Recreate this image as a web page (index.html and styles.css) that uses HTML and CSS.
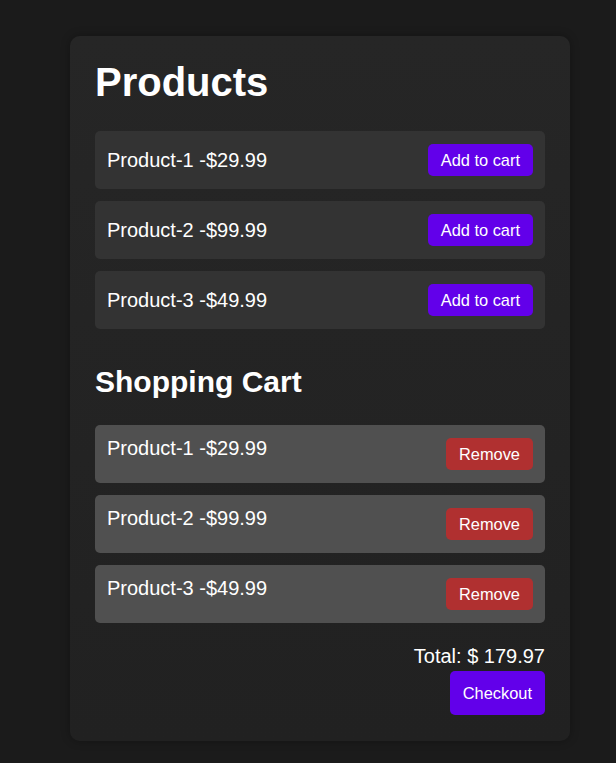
FILE: index.html
```html
<!DOCTYPE html>
<html lang="en">
<head>
	<meta charset="UTF-8">
	<title>Shop</title>
	<link rel="stylesheet" href="styles.css">
</head>
<body>
	<div class="shop">
		<h1>Products</h1>
		<ul class="list products">
			<li><span>Product-1 -$29.99</span><button class="btn add">Add to cart</button></li>
			<li><span>Product-2 -$99.99</span><button class="btn add">Add to cart</button></li>
			<li><span>Product-3 -$49.99</span><button class="btn add">Add to cart</button></li>
		</ul>
		<h2>Shopping Cart</h2>
		<ul class="list cart">
			<li><span>Product-1 -$29.99</span><button class="btn remove">Remove</button></li>
			<li><span>Product-2 -$99.99</span><button class="btn remove">Remove</button></li>
			<li><span>Product-3 -$49.99</span><button class="btn remove">Remove</button></li>
		</ul>
		<div class="total">
			<p>Total: $ 179.97</p>
			<button class="btn checkout">Checkout</button>
		</div>
	</div>
</body>
</html>
```
FILE: styles.css
```css
*{margin: 0;padding: 0;box-sizing: border-box;}
li{list-style: none;}
body { background: #1b1b1b; font-family: "Liberation Sans", Arial, sans-serif; color: #fff; padding: 36px 0 20px; }
.shop { width: 500px; margin: 0 0 0 70px; padding: 23px 25px 26px; background: linear-gradient(#262626, #212121); border-radius: 10px; box-shadow: 0 0 10px rgba(0,0,0,0.3); }
h1 { font-size: 40px; line-height: 46px; font-weight: bold; margin-bottom: 26px; }
h2 { font-size: 30px; line-height: 34px; font-weight: bold; margin: 36px 0 26px; }
.list li { display: flex; justify-content: space-between; padding: 0 12px; height: 58px; margin-bottom: 12px; border-radius: 5px; font-size: 20px; line-height: 23px; }
.list li:last-child { margin-bottom: 0; }
.products li { background: #333; align-items: center; }
.cart li { background: #505050; align-items: flex-start; padding-top: 12px; }
.cart li button { margin-top: 1px; }
.btn { border: none; border-radius: 5px; color: #fff; font-family: inherit; font-size: 16.4px; line-height: 18px; padding: 7px 13px; cursor: pointer; }
.add { background: #6200ea; }
.remove { background: #b03030; }
.total { display: flex; flex-direction: column; align-items: flex-end; margin-top: 22px; }
.total p { font-size: 20px; line-height: 23px; margin-bottom: 3px; }
.checkout { background: #6200ea; padding: 13px 13px; }
```
